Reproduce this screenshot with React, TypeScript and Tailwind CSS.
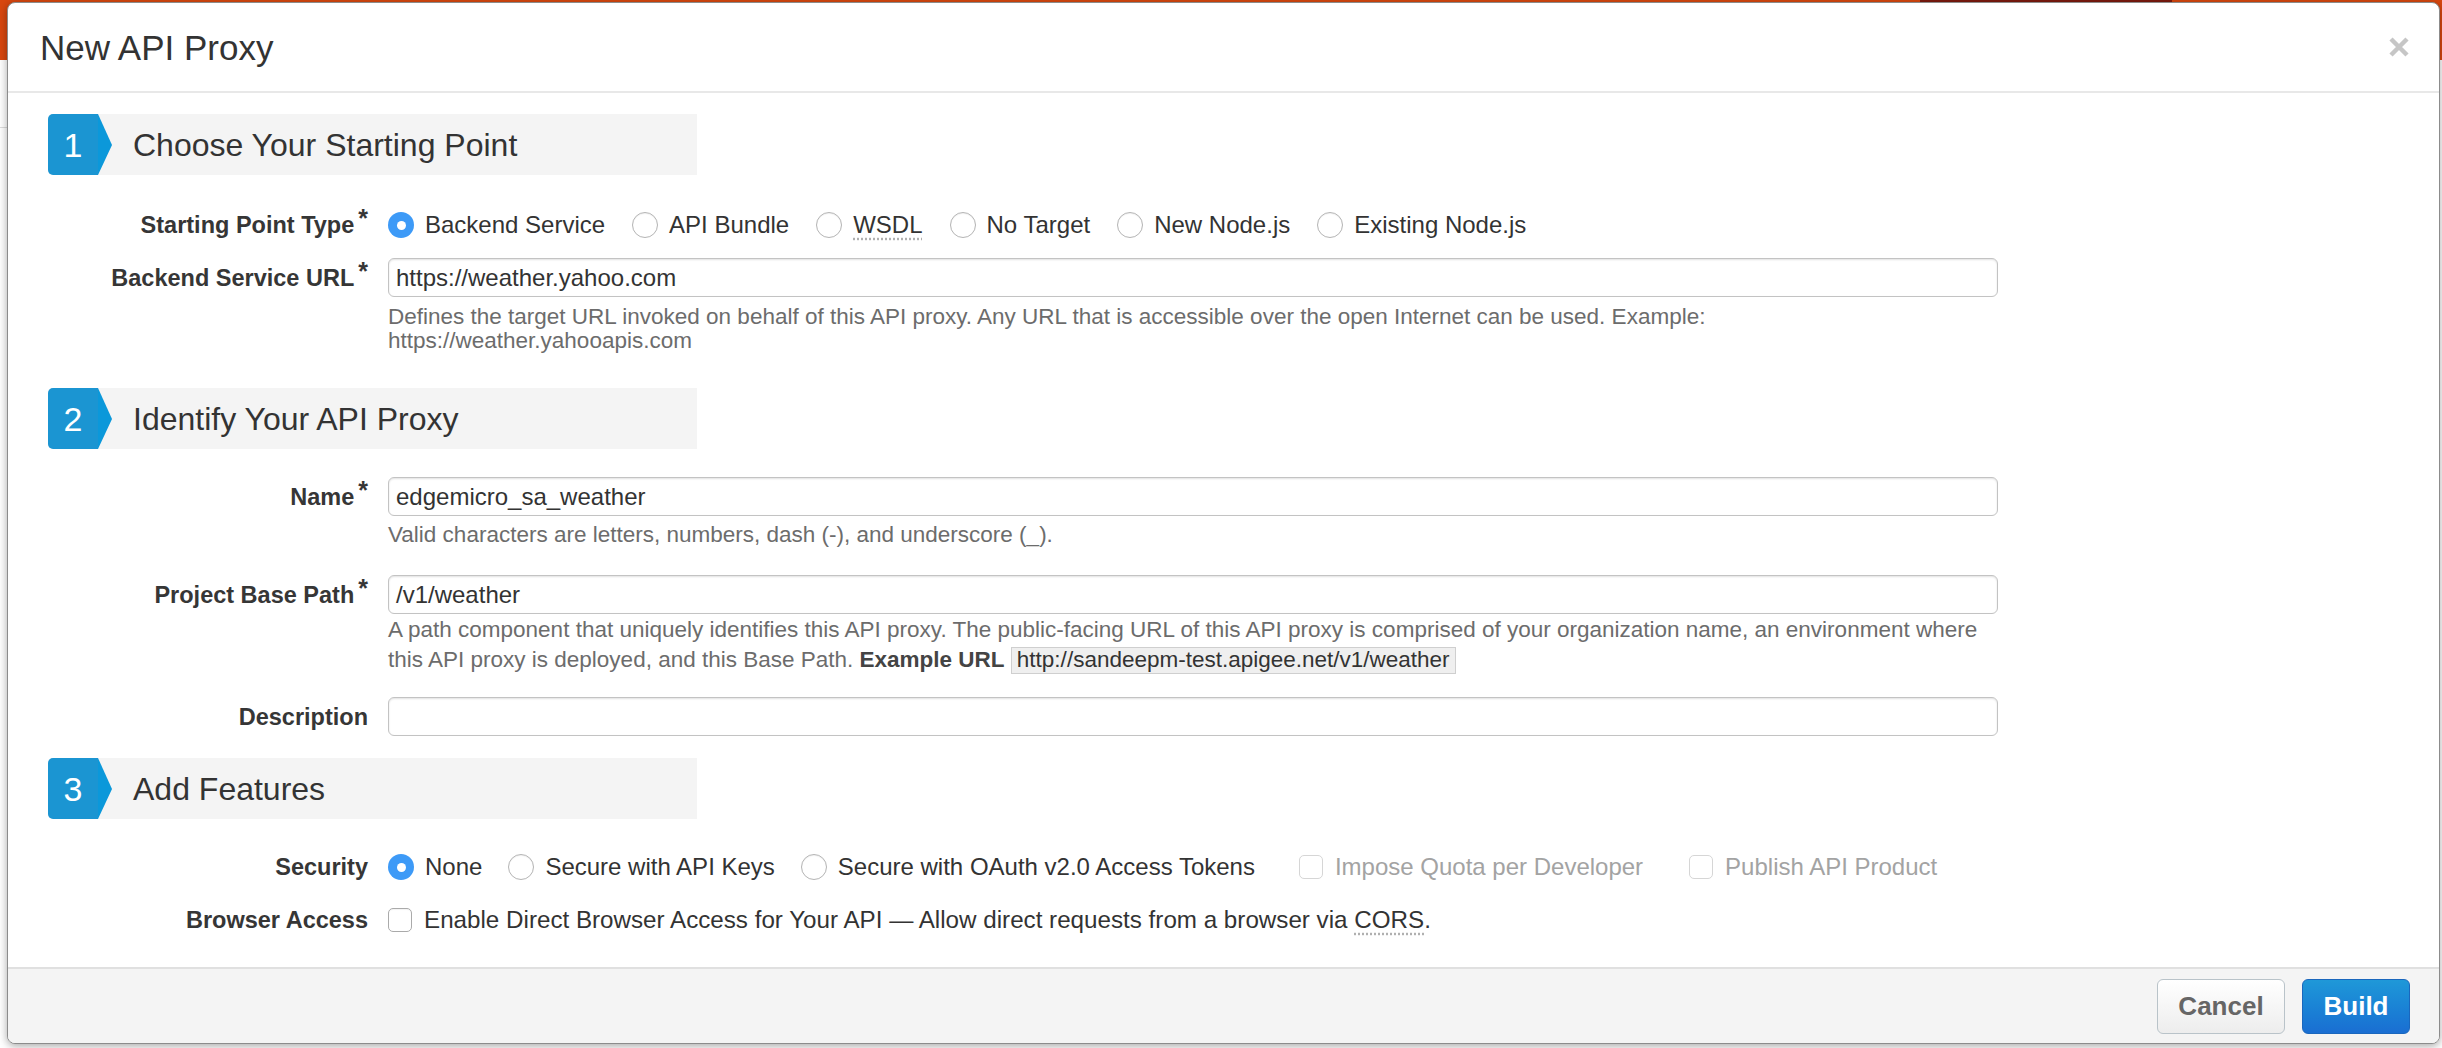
import React from "react";

function Radio({ checked }: { checked?: boolean }) {
  if (checked) {
    return (
      <span className="w-[26px] h-[26px] rounded-full bg-[#3d9af7] flex items-center justify-center shrink-0">
        <span className="w-[9px] h-[9px] rounded-full bg-white" />
      </span>
    );
  }
  return (
    <span className="w-[26px] h-[26px] rounded-full border border-[#b4b4b4] bg-white shadow-[inset_0_1px_1px_rgba(0,0,0,0.06)] shrink-0" />
  );
}

function Checkbox({ disabled }: { disabled?: boolean }) {
  return (
    <span
      className={
        disabled
          ? "w-[24px] h-[24px] rounded-[5px] border border-[#d6d6d6] bg-white shrink-0"
          : "w-[24px] h-[24px] rounded-[5px] border border-[#aaaaaa] bg-white shadow-[inset_0_1px_1px_rgba(0,0,0,0.05)] shrink-0"
      }
    />
  );
}

function RadioOpt({ label, checked, abbr }: { label: string; checked?: boolean; abbr?: boolean }) {
  return (
    <span className="flex items-center gap-[11px]">
      <Radio checked={checked} />
      <span
        className={
          abbr
            ? "text-[24px] text-[#333] leading-[26px] underline decoration-dotted decoration-[#b0b0b0] underline-offset-[5px]"
            : "text-[24px] text-[#333] leading-[26px]"
        }
      >
        {label}
      </span>
    </span>
  );
}

function Label({ text, req }: { text: string; req?: boolean }) {
  return (
    <span className="text-[23.5px] font-bold text-[#363636] whitespace-nowrap flex items-start">
      <span className="leading-[26px]">{text}</span>
      {req && <span className="text-[25px] leading-[18px] ml-[4px] -mt-[3px]">*</span>}
    </span>
  );
}

function SectionHeader({ n, title }: { n: string; title: string }) {
  return (
    <div className="flex h-[61px] w-[649px] bg-[#f4f4f4] items-center rounded-l-[5px]">
      <div className="relative h-full w-[50px] bg-[#1b95d2] rounded-l-[5px] flex items-center justify-center text-white text-[34px] leading-none">
        {n}
        <svg className="absolute left-[50px] top-0 h-full w-[14px]" viewBox="0 0 14 61" preserveAspectRatio="none">
          <polygon points="0,0 14,31 0,61" fill="#0b98da" />
        </svg>
      </div>
      <span className="ml-[35px] text-[32px] text-[#333] leading-none">{title}</span>
    </div>
  );
}

function TextBox({ value }: { value?: string }) {
  return (
    <div className="h-[39px] w-[1610px] rounded-[6px] border border-[#c3c3c3] bg-white shadow-[inset_0_1px_2px_rgba(0,0,0,0.12)] flex items-center pl-[7px] text-[24px] text-[#333]">
      {value}
    </div>
  );
}

export default function App() {
  return (
    <div className="relative w-[2442px] h-[1048px] overflow-hidden bg-white font-['Liberation_Sans',Arial,sans-serif]">
      <div className="h-[60px] bg-[#d8470f] flex">
        <div className="w-[1920px]" />
        <div className="w-[252px] h-[4px] bg-[#7c1a0e]" />
      </div>
      <div className="h-[1px] bg-[#dcdcdc] mt-[67px] w-[10px]" />

      <div className="absolute top-[2px] left-[7px] right-[2px] bottom-[4px] bg-white border border-[#8c8c8c] rounded-[8px] shadow-[0_2px_8px_rgba(0,0,0,0.35)] flex flex-col overflow-hidden">
        {/* header */}
        <div className="h-[90px] shrink-0 border-b-2 border-[#e8e8e8] flex items-center justify-between pl-[32px] pr-[30px]">
          <span className="text-[35px] text-[#333] leading-none">New API Proxy</span>
          <svg width="20" height="20" viewBox="0 0 20 20">
            <path d="M2 2 L18 18 M18 2 L2 18" stroke="#c6c6c6" strokeWidth="4.5" strokeLinecap="butt" />
          </svg>
        </div>

        {/* body */}
        <div className="flex-1 pl-[40px] pt-[21px]">
          <SectionHeader n="1" title="Choose Your Starting Point" />

          <div className="flex gap-[20px] mt-[37px] h-[26px] items-center">
            <div className="w-[320px] flex justify-end">
              <Label text="Starting Point Type" req />
            </div>
            <div className="flex items-center gap-[27px]">
              <RadioOpt label="Backend Service" checked />
              <RadioOpt label="API Bundle" />
              <RadioOpt label="WSDL" abbr />
              <RadioOpt label="No Target" />
              <RadioOpt label="New Node.js" />
              <RadioOpt label="Existing Node.js" />
            </div>
          </div>

          <div className="flex gap-[20px] mt-[20px]">
            <div className="w-[320px] h-[39px] flex justify-end items-center">
              <Label text="Backend Service URL" req />
            </div>
            <div>
              <TextBox value="https://weather.yahoo.com" />
              <div className="mt-[8px] text-[22.5px] leading-[24px] text-[#6c6c6c]">
                <div>
                  Defines the target URL invoked on behalf of this API proxy. Any URL that is accessible over the open
                  Internet can be used. Example:
                </div>
                <div>https://weather.yahooapis.com</div>
              </div>
            </div>
          </div>

          <div className="mt-[35px]">
            <SectionHeader n="2" title="Identify Your API Proxy" />
          </div>

          <div className="flex gap-[20px] mt-[28px]">
            <div className="w-[320px] h-[39px] flex justify-end items-center">
              <Label text="Name" req />
            </div>
            <div>
              <TextBox value="edgemicro_sa_weather" />
              <div className="mt-[7px] text-[22.5px] leading-[24px] text-[#6c6c6c]">
                Valid characters are letters, numbers, dash (-), and underscore (_).
              </div>
            </div>
          </div>

          <div className="flex gap-[20px] mt-[28px]">
            <div className="w-[320px] h-[39px] flex justify-end items-center">
              <Label text="Project Base Path" req />
            </div>
            <div>
              <TextBox value="/v1/weather" />
              <div className="mt-[4px] text-[22.5px] leading-[24px] text-[#6c6c6c]">
                <div>
                  A path component that uniquely identifies this API proxy. The public-facing URL of this API proxy is
                  comprised of your organization name, an environment where
                </div>
                <div className="h-[36px] flex items-center whitespace-pre">
                  <span>this API proxy is deployed, and this Base Path. </span>
                  <span className="font-bold text-[#444]">Example URL</span>
                  <span> </span>
                  <span className="h-[27px] flex items-center px-[5px] bg-[#efefef] border border-[#cfcfcf] text-[#333]">
                    http://sandeepm-test.apigee.net/v1/weather
                  </span>
                </div>
              </div>
            </div>
          </div>

          <div className="flex gap-[20px] mt-[19px]">
            <div className="w-[320px] h-[39px] flex justify-end items-center">
              <Label text="Description" />
            </div>
            <div>
              <TextBox />
            </div>
          </div>

          <div className="mt-[22px]">
            <SectionHeader n="3" title="Add Features" />
          </div>

          <div className="flex gap-[20px] mt-[35px] h-[26px] items-center">
            <div className="w-[320px] flex justify-end">
              <Label text="Security" />
            </div>
            <div className="flex items-center gap-[26px]">
              <RadioOpt label="None" checked />
              <RadioOpt label="Secure with API Keys" />
              <RadioOpt label="Secure with OAuth v2.0 Access Tokens" />
              <span className="flex items-center gap-[12px] ml-[18px]">
                <Checkbox disabled />
                <span className="text-[24px] text-[#a3a3a3] leading-[26px]">Impose Quota per Developer</span>
              </span>
              <span className="flex items-center gap-[12px] ml-[20px]">
                <Checkbox disabled />
                <span className="text-[24px] text-[#a3a3a3] leading-[26px]">Publish API Product</span>
              </span>
            </div>
          </div>

          <div className="flex gap-[20px] mt-[27px] h-[26px] items-center">
            <div className="w-[320px] flex justify-end">
              <Label text="Browser Access" />
            </div>
            <span className="flex items-center gap-[12px]">
              <Checkbox />
              <span className="text-[24.2px] text-[#333] leading-[26px]">
                Enable Direct Browser Access for Your API — Allow direct requests from a browser via{" "}
                <span className="underline decoration-dotted decoration-[#b0b0b0] underline-offset-[5px]">CORS</span>.
              </span>
            </span>
          </div>
        </div>

        {/* footer */}
        <div className="h-[76px] shrink-0 border-t-2 border-[#e0e0e0] bg-[#f4f4f4] flex items-center justify-end gap-[17px] pr-[29px]">
          <button className="w-[128px] h-[55px] rounded-[6px] border border-[#b9c3c9] bg-gradient-to-b from-[#ffffff] to-[#ededed] text-[26px] font-bold text-[#666]">
            Cancel
          </button>
          <button className="w-[108px] h-[55px] rounded-[6px] border border-[#1a67bd] bg-gradient-to-b from-[#1f98d8] to-[#1a6ed2] text-[26px] font-bold text-white">
            Build
          </button>
        </div>
      </div>
    </div>
  );
}
